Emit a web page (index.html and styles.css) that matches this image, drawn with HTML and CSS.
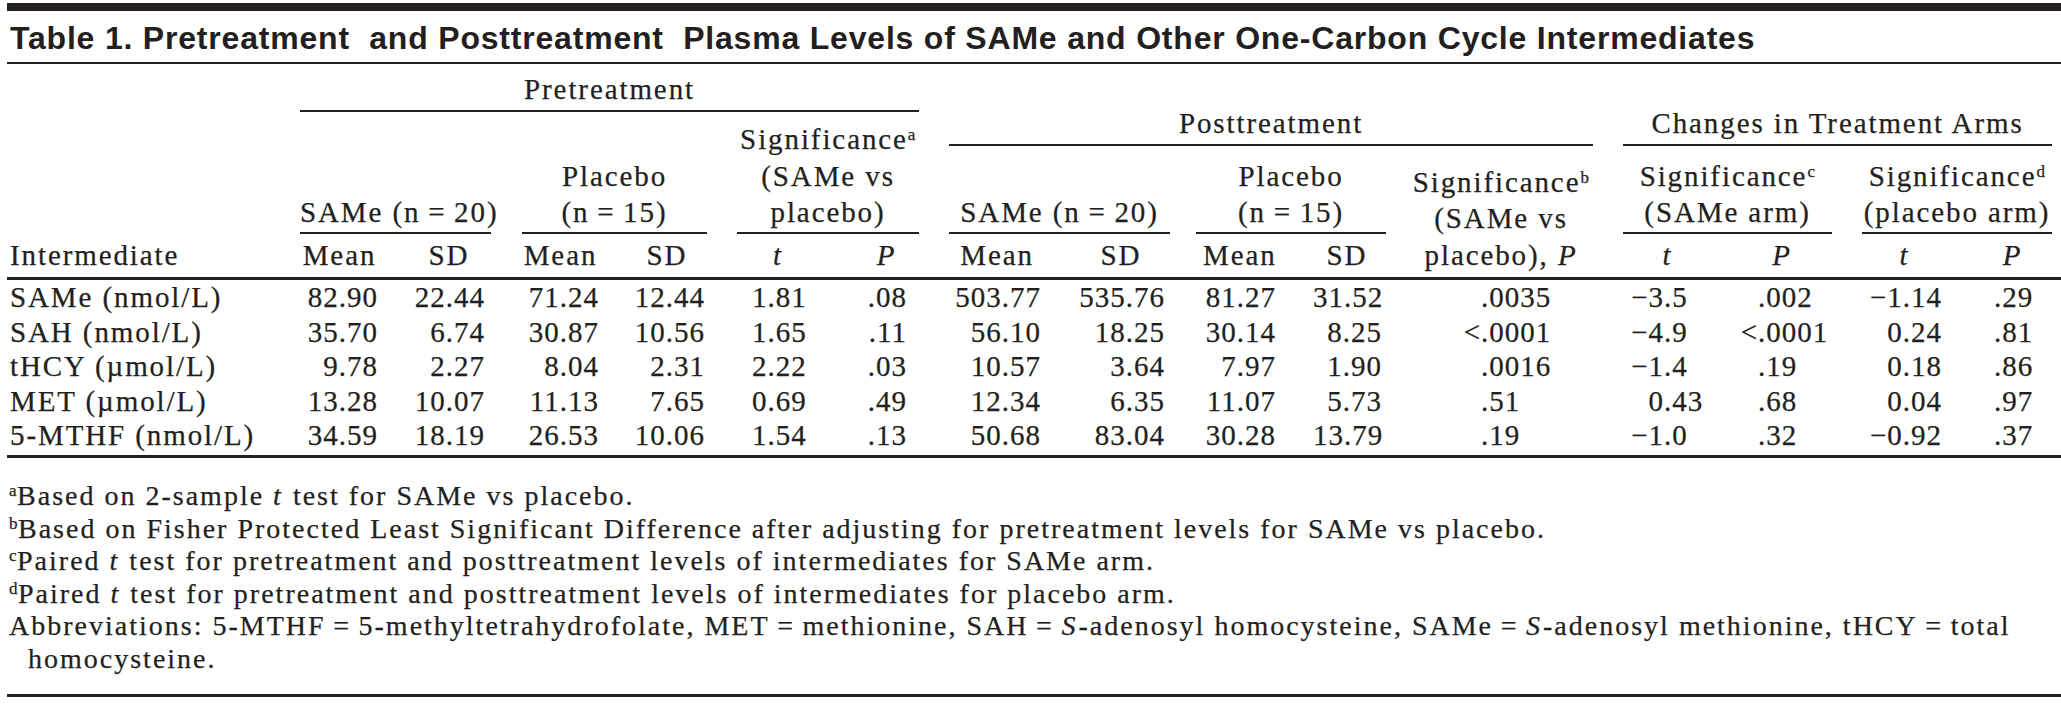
FILE: index.html
```html
<!DOCTYPE html>
<html lang="en">
<head>
<meta charset="utf-8">
<title>Table 1</title>
<link rel="stylesheet" href="styles.css">
</head>
<body>
<div class="page">
  <h1 class="title">Table 1. Pretreatment  and Posttreatment  Plasma Levels of SAMe and Other One-Carbon Cycle Intermediates</h1>
  <table class="tbl">
    <colgroup>
      <col class="w1"><col class="w2"><col class="w3"><col class="w4"><col class="w5"><col class="w6"><col class="w7"><col class="w8">
      <col class="w9"><col class="w10"><col class="w11"><col class="w12"><col class="w13"><col class="w14"><col class="w15"><col class="w16">
    </colgroup>
    <thead>
      <tr class="r1">
        <th rowspan="4" class="stub hb">Intermediate</th>
        <th colspan="6" class="g-pre"><div class="ul one">Pretreatment</div></th>
        <th colspan="9"></th>
      </tr>
      <tr class="r2">
        <th colspan="2" rowspan="2" class="g-same1"><div class="ul sub">SAMe (n&thinsp;=&thinsp;20)</div></th>
        <th colspan="2" rowspan="2" class="g-plac1"><div class="ul sub">Placebo<br>(n&thinsp;=&thinsp;15)</div></th>
        <th colspan="2" rowspan="2" class="g-siga"><div class="ul sub">Significance<sup>a</sup><br>(SAMe vs<br>placebo)</div></th>
        <th colspan="5" class="g-post"><div class="ul two">Posttreatment</div></th>
        <th colspan="4" class="g-chg"><div class="ul two">Changes in Treatment Arms</div></th>
      </tr>
      <tr class="r3">
        <th colspan="2" class="g-same2"><div class="ul sub">SAMe (n&thinsp;=&thinsp;20)</div></th>
        <th colspan="2" class="g-plac2"><div class="ul sub">Placebo<br>(n&thinsp;=&thinsp;15)</div></th>
        <th rowspan="2" class="sigb hb">Significance<sup>b</sup><br>(SAMe vs<br>placebo), <i>P</i></th>
        <th colspan="2" class="g-sigc"><div class="ul sub">Significance<sup>c</sup><br>(SAMe arm)</div></th>
        <th colspan="2" class="g-sigd"><div class="ul sub">Significance<sup>d</sup><br>(placebo arm)</div></th>
      </tr>
      <tr class="r4">
        <th class="hb k2">Mean</th>
        <th class="hb k3">SD</th>
        <th class="hb k4">Mean</th>
        <th class="hb k5">SD</th>
        <th class="hb k6"><i>t</i></th>
        <th class="hb k7"><i>P</i></th>
        <th class="hb k8">Mean</th>
        <th class="hb k9">SD</th>
        <th class="hb k10">Mean</th>
        <th class="hb k11">SD</th>
        <th class="hb k13"><i>t</i></th>
        <th class="hb k14"><i>P</i></th>
        <th class="hb k15"><i>t</i></th>
        <th class="hb k16"><i>P</i></th>
      </tr>
    </thead>
    <tbody>
      <tr>
        <td>SAMe (nmol/L)</td><td>82.90</td><td>22.44</td><td>71.24</td><td>12.44</td><td>1.81</td><td>.08</td>
        <td>503.77</td><td>535.76</td><td>81.27</td><td>31.52</td>
        <td><span class="int"></span>.0035</td><td><span class="int">−3</span>.5</td><td><span class="int"></span>.002</td><td>−1.14</td><td>.29</td>
      </tr>
      <tr>
        <td>SAH (nmol/L)</td><td>35.70</td><td>6.74</td><td>30.87</td><td>10.56</td><td>1.65</td><td>.11</td>
        <td>56.10</td><td>18.25</td><td>30.14</td><td>8.25</td>
        <td><span class="int">&lt;</span>.0001</td><td><span class="int">−4</span>.9</td><td><span class="int">&lt;</span>.0001</td><td>0.24</td><td>.81</td>
      </tr>
      <tr>
        <td>tHCY (µmol/L)</td><td>9.78</td><td>2.27</td><td>8.04</td><td>2.31</td><td>2.22</td><td>.03</td>
        <td>10.57</td><td>3.64</td><td>7.97</td><td>1.90</td>
        <td><span class="int"></span>.0016</td><td><span class="int">−1</span>.4</td><td><span class="int"></span>.19</td><td>0.18</td><td>.86</td>
      </tr>
      <tr>
        <td>MET (µmol/L)</td><td>13.28</td><td>10.07</td><td>11.13</td><td>7.65</td><td>0.69</td><td>.49</td>
        <td>12.34</td><td>6.35</td><td>11.07</td><td>5.73</td>
        <td><span class="int"></span>.51</td><td><span class="int">0</span>.43</td><td><span class="int"></span>.68</td><td>0.04</td><td>.97</td>
      </tr>
      <tr class="last">
        <td>5-MTHF (nmol/L)</td><td>34.59</td><td>18.19</td><td>26.53</td><td>10.06</td><td>1.54</td><td>.13</td>
        <td>50.68</td><td>83.04</td><td>30.28</td><td>13.79</td>
        <td><span class="int"></span>.19</td><td><span class="int">−1</span>.0</td><td><span class="int"></span>.32</td><td>−0.92</td><td>.37</td>
      </tr>
    </tbody>
  </table>
  <div class="notes">
    <p class="fn"><sup>a</sup>Based on 2-sample <i>t</i> test for SAMe vs placebo.</p>
    <p class="fn"><sup>b</sup>Based on Fisher Protected Least Significant Difference after adjusting for pretreatment levels for SAMe vs placebo.</p>
    <p class="fn"><sup>c</sup>Paired <i>t</i> test for pretreatment and posttreatment levels of intermediates for SAMe arm.</p>
    <p class="fn"><sup>d</sup>Paired <i>t</i> test for pretreatment and posttreatment levels of intermediates for placebo arm.</p>
    <p class="fn abbr">Abbreviations: 5-MTHF&thinsp;=&thinsp;5-methyltetrahydrofolate, MET&thinsp;=&thinsp;methionine, SAH&thinsp;=&thinsp;<i>S</i>-adenosyl homocysteine, SAMe&thinsp;=&thinsp;<i>S</i>-adenosyl methionine, tHCY&thinsp;=&thinsp;total<br>homocysteine.</p>
  </div>
</div>
</body>
</html>
```

FILE: styles.css
```css
* { box-sizing: border-box; }

html, body {
  margin: 0;
  background: #ffffff;
}

body {
  color: #231f20;
  font-family: "Liberation Serif", "Times New Roman", serif;
}

.page {
  width: 2061px;
  padding: 3px 0 0 7px;
}

/* ---------- title ---------- */
.title {
  margin: 0;
  border-top: 8px solid #231f20;
  border-bottom: 2px solid #231f20;
  padding: 6.9px 0 4.1px 3px;
  font-family: "Liberation Sans", Arial, sans-serif;
  font-weight: 700;
  font-size: 32px;
  line-height: 40px;
  letter-spacing: 0.8px;
  white-space: pre;
}

/* ---------- table ---------- */
.tbl {
  width: 2054px;
  table-layout: fixed;
  border-collapse: separate;
  border-spacing: 0;
  font-size: 29px;
  letter-spacing: 1.9px;
  -webkit-text-stroke: 0.25px #231f20;
}

.w1 { width: 283px; }
.w2 { width: 105px; }
.w3 { width: 111px; }
.w4 { width: 108px; }
.w5 { width: 108px; }
.w6 { width: 113px; }
.w7 { width: 99px; }
.w8 { width: 125px; }
.w9 { width: 124px; }
.w10 { width: 111px; }
.w11 { width: 106px; }
.w12 { width: 208px; }
.w13 { width: 108px; }
.w14 { width: 131px; }
.w15 { width: 120px; }
.w16 { width: 94px; }

.tbl th {
  font-weight: normal;
  text-align: center;
  vertical-align: bottom;
  padding: 0;
  white-space: nowrap;
}

.tbl sup,
.fn sup {
  font-size: 17px;
  line-height: 0;
  vertical-align: 9px;
  letter-spacing: 0.5px;
}

.r1 { height: 48px; }
.r2 { height: 34px; }
.r3 { height: 88px; }
.r4 { height: 46px; }

.ul { border-bottom: 2px solid #231f20; }

.one { line-height: 36.5px; padding-bottom: 2.9px; }
.two { line-height: 22px; padding-bottom: 9.5px; }
.sub { line-height: 36.5px; padding-bottom: 1.4px; }

.hb { border-bottom: 3px solid #231f20; }

.stub {
  text-align: left !important;
  padding: 0 0 3.9px 3px !important;
  line-height: 36.5px;
}

.sigb {
  line-height: 36.5px;
  padding: 0 6px 3.9px 0 !important;
}

.r4 th {
  line-height: 36.5px;
  padding-top: 2.6px;
  padding-bottom: 3.9px;
}

/* group header spans: padding sets the extent of each underline */
.g-pre   { padding: 0 15px 0 10px !important; }
.g-same1 { padding: 0 15px 0 10px !important; }
.g-plac1 { padding: 0 15px 0 16px !important; }
.g-siga  { padding: 0 15px !important; }
.g-post  { padding: 0 15px !important; }
.g-same2 { padding: 0 13px 0 15px !important; }
.g-plac2 { padding: 0 14px 0 13px !important; }
.g-chg   { padding: 0 9px 0 15px !important; }
.g-sigc  { padding: 0 15px !important; }
.g-sigd  { padding: 0 9px 0 15px !important; }

/* column content boxes (header row 4) */
.r4 .k2  { padding-left: 12px; padding-right: 18px; }
.r4 .k3  { padding-left: 19px; padding-right: 22px; }
.r4 .k4  { padding-left: 17px; padding-right: 16px; }
.r4 .k5  { padding-left: 16px; padding-right: 18px; }
.r4 .k6  { padding-left: 30px; padding-right: 31px; }
.r4 .k7  { padding-left: 32px; padding-right: 28px; }
.r4 .k8  { padding-left: 20px; padding-right: 19px; }
.r4 .k9  { padding-left: 19px; padding-right: 19px; }
.r4 .k10 { padding-left: 20px; padding-right: 19px; }
.r4 .k11 { padding-left: 19px; padding-right: 19px; }
.r4 .k13 { padding-left: 21px; padding-right: 10px; }
.r4 .k14 { padding-left: 17px; padding-right: 16px; }
.r4 .k15 { padding-left: 21px; padding-right: 26px; }
.r4 .k16 { padding-left: 27px; padding-right: 30px; }

/* body */
.tbl td {
  line-height: 24px;
  padding-top: 5.5px;
  padding-bottom: 5px;
  text-align: right;
  white-space: nowrap;
  vertical-align: top;
  letter-spacing: 1px;
}

.tbl tr.last td {
  padding-bottom: 7.5px;
  border-bottom: 3px solid #231f20;
}

.tbl td:nth-child(1)  { text-align: left; padding-left: 3px; letter-spacing: 1.9px; }
.tbl td:nth-child(2)  { padding-left: 12px; padding-right: 17px; }
.tbl td:nth-child(3)  { padding-left: 19px; padding-right: 21px; }
.tbl td:nth-child(4)  { padding-left: 17px; padding-right: 15px; }
.tbl td:nth-child(5)  { padding-left: 16px; padding-right: 17px; }
.tbl td:nth-child(6)  { padding-left: 30px; padding-right: 30px; }
.tbl td:nth-child(7)  { padding-left: 32px; padding-right: 27px; }
.tbl td:nth-child(8)  { padding-left: 20px; padding-right: 18px; }
.tbl td:nth-child(9)  { padding-left: 19px; padding-right: 18px; }
.tbl td:nth-child(10) { padding-left: 20px; padding-right: 18px; }
.tbl td:nth-child(11) { padding-left: 19px; padding-right: 18px; }
.tbl td:nth-child(12) { text-align: left; padding-left: 56px; }
.tbl td:nth-child(13) { text-align: left; padding-left: 21px; }
.tbl td:nth-child(14) { text-align: left; padding-left: 17px; }
.tbl td:nth-child(15) { padding-left: 21px; padding-right: 25px; }
.tbl td:nth-child(16) { padding-left: 27px; padding-right: 29px; }

.int {
  display: inline-block;
  text-align: right;
  width: 25px;
}
.tbl td:nth-child(13) .int { width: 35px; }

/* ---------- footnotes ---------- */
.notes {
  width: 2054px;
  padding: 22.5px 0 19px 2px;
  border-bottom: 3px solid #231f20;
  font-size: 28px;
  line-height: 32.5px;
  letter-spacing: 2px;
  -webkit-text-stroke: 0.25px #231f20;
}

.fn { margin: 0; }

.fn i { margin-right: 1px; }

.abbr {
  padding-left: 19px;
  text-indent: -19px;
}
```
